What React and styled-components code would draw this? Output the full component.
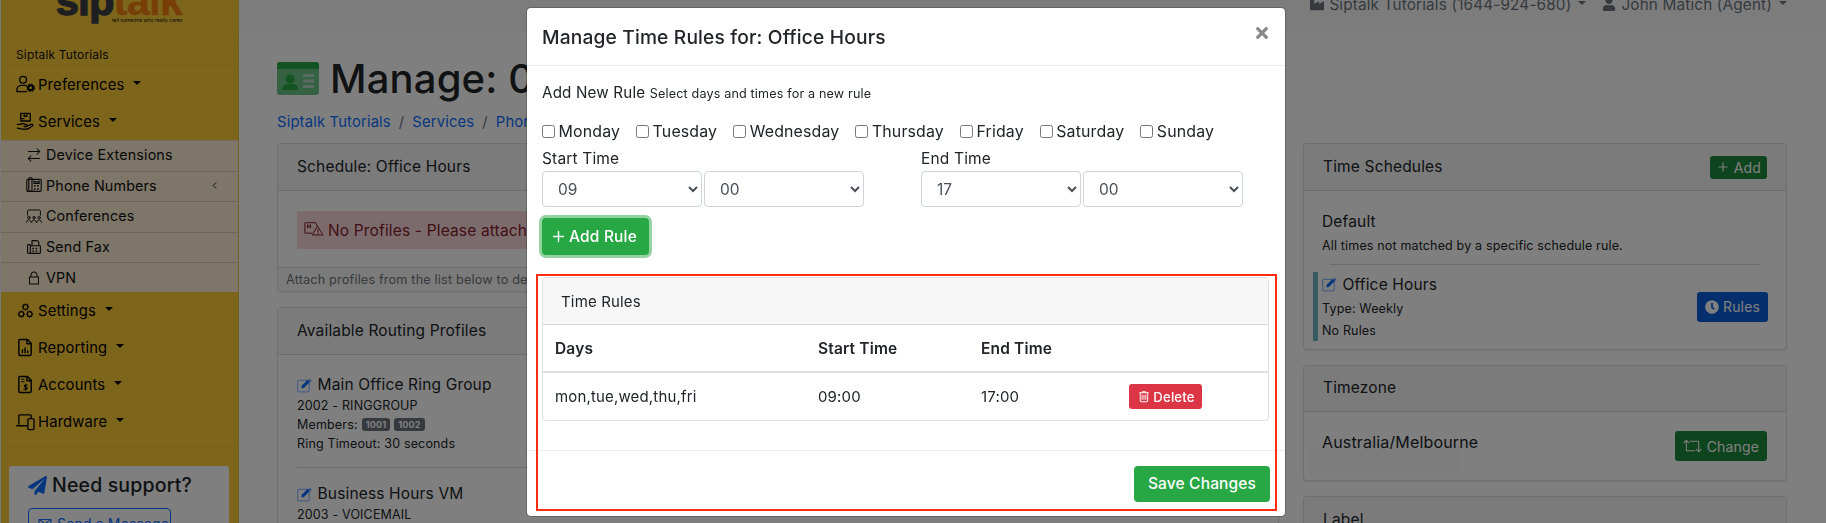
import React from 'react';
import styled, { createGlobalStyle } from 'styled-components';
import {
  LiaExchangeAltSolid,
  LiaLockSolid,
  LiaCogsSolid,
  LiaTrashAltSolid,
  LiaEnvelope,
} from 'react-icons/lia';
import { FaTimes, FaPaperPlane, FaIndustry, FaUser, FaClock } from 'react-icons/fa';
import { LuPlus, LuChevronLeft } from 'react-icons/lu';

const GlobalStyle = createGlobalStyle`
  html, body { margin: 0; padding: 0; height: 523px; overflow: hidden; background: #fff; }
  body { font-family: Inter, "Noto Sans", sans-serif; color: #212529; letter-spacing: 0.01em; }
  * { box-sizing: border-box; }
`;

const Shell = styled.div`
  display: flex;
  width: 1826px;
  height: 523px;
  overflow: hidden;
  position: relative;
`;

/* sidebar */
const Sidebar = styled.aside`
  width: 239px;
  flex: none;
  background: #fdcb38;
  border-left: 1px solid #f5f5f5;
  border-right: 1px solid #e8c040;
  display: flex;
  flex-direction: column;
  overflow: hidden;
`;

const LogoArea = styled.div`
  height: 43px;
  flex: none;
  border-bottom: 1px solid rgba(0, 0, 0, 0.04);
  padding-left: 55px;
  position: relative;
  overflow: hidden;
`;

const LogoWord = styled.div`
  font-family: "Liberation Sans", sans-serif;
  font-weight: 700;
  font-size: 41px;
  line-height: 42px;
  letter-spacing: -0.5px;
  margin-top: -20px;
  color: #3a3f44;
  -webkit-text-stroke: 1.5px #3a3f44;
  span { color: #ef7d10; -webkit-text-stroke: 0.5px #ef7d10; }
`;

const LogoTag = styled.div`
  position: absolute;
  left: 111px;
  top: 17px;
  font-size: 5px;
  line-height: 6px;
  letter-spacing: 0;
  white-space: nowrap;
  color: #111;
`;

const AccountName = styled.div`
  height: 23px;
  flex: none;
  padding-left: 15px;
  font-size: 12px;
  line-height: 23px;
  color: #111;
  border-bottom: 1px solid rgba(0, 0, 0, 0.04);
`;

const NavRow = styled.div`
  height: 37px;
  flex: none;
  display: flex;
  align-items: center;
  font-size: 14.8px;
  color: #000;
`;

const NavIcon = styled.span`
  width: 37px;
  flex: none;
  padding-left: 15px;
  svg { display: block; width: 19px; height: 19px; }
`;

const Caret = styled.span`
  flex: none;
  width: 0;
  height: 0;
  margin: -3px 0 0 ${({ $gap }) => $gap ?? 9}px;
  border-top: 4.5px solid currentColor;
  border-left: 4.5px solid transparent;
  border-right: 4.5px solid transparent;
`;

const SubPanel = styled.div`
  flex: none;
  background: #faecd2;
  height: 152px;
  border-top: 1px solid rgba(0, 0, 0, 0.06);
`;

const SubRow = styled.div`
  height: 30.6px;
  display: flex;
  align-items: center;
  font-size: 14.3px;
  color: #111;
  padding: 0 0 2px 25px;
  gap: 4px;
  border-bottom: ${({ $last }) => ($last ? 'none' : '1px solid rgba(0, 0, 0, 0.14)')};
  svg { width: 16px; height: 16px; flex: none; }
`;

const SubChevron = styled(LuChevronLeft)`
  margin-left: auto;
  margin-right: 18px;
  && { width: 11px; height: 11px; }
`;

const SideDivider = styled.div`
  height: 1px;
  flex: none;
  background: rgba(0, 0, 0, 0.04);
  margin-top: 6px;
`;

const SupportCard = styled.div`
  flex: none;
  margin: 19px 0 0 8px;
  width: 220px;
  height: 100px;
  background: #fff;
  border-radius: 3px;
  padding: 6px 19px;
`;

const SupportTitle = styled.div`
  display: flex;
  align-items: center;
  gap: 5px;
  font-size: 19.5px;
  font-weight: 500;
  line-height: 26px;
  color: #212529;
  svg { color: #0d6efd; width: 19px; height: 19px; }
`;

const SupportButton = styled.div`
  margin-top: 10px;
  width: 143px;
  height: 30px;
  border: 1px solid #0d6efd;
  border-radius: 4px;
  color: #0d6efd;
  font-size: 14px;
  display: flex;
  align-items: center;
  gap: 4px;
  padding-left: 8px;
  svg { width: 16px; height: 16px; }
`;

/* page */
const Main = styled.main`
  flex: 1;
  min-width: 0;
  display: flex;
  flex-direction: column;
`;

const TopBar = styled.header`
  height: 33px;
  flex: none;
  background: #f8f8f8;
  display: flex;
  justify-content: flex-end;
  padding-right: 39px;
  gap: 16px;
  overflow: hidden;
`;

const TopItem = styled.div`
  margin-top: -7px;
  height: 22px;
  display: flex;
  align-items: center;
  gap: 5px;
  font-size: 15.3px;
  color: #6c757d;
  svg { width: 14px; height: 14px; }
`;

const Columns = styled.div`
  display: flex;
  gap: 24px;
  padding-left: 38px;
`;

const LeftColumn = styled.div`
  width: 1002px;
  flex: none;
`;

const RightColumn = styled.div`
  width: 484px;
  flex: none;
  padding-top: 110px;
`;

const PageTitle = styled.h1`
  margin: 20px 0 0;
  height: 50px;
  display: flex;
  align-items: center;
  gap: 11px;
  font-size: 40px;
  font-weight: 500;
  color: #212529;
`;

const Breadcrumbs = styled.nav`
  margin-top: 7px;
  height: 23px;
  display: flex;
  align-items: center;
  gap: 8px;
  font-size: 14.8px;
  color: #0d6efd;
  span { color: #6c757d; }
`;

const Card = styled.section`
  background: #fff;
  border: 1px solid rgba(0, 0, 0, 0.125);
  border-radius: 4px;
  margin-top: ${({ $gap }) => $gap ?? 15}px;
  box-shadow: 0 1px 2px rgba(0, 0, 0, 0.08);
`;

const CardHeader = styled.div`
  height: ${({ $h }) => $h || 47}px;
  padding: 0 19px 2px;
  display: flex;
  align-items: center;
  justify-content: space-between;
  background: #f7f7f7;
  border-bottom: 1px solid rgba(0, 0, 0, 0.125);
  font-size: 15.5px;
  color: #212529;
`;

const CardBody = styled.div`
  padding: ${({ $pad }) => $pad || '19px'};
`;

const Alert = styled.div`
  height: 38px;
  background: #f8d7da;
  color: #842029;
  display: flex;
  align-items: center;
  gap: 4px;
  padding-left: 7px;
  font-size: 15.5px;
  svg { width: 20px; height: 20px; }
`;

const CardFooter = styled.div`
  height: 24px;
  padding-left: 8px;
  display: flex;
  align-items: center;
  background: #f7f7f7;
  border-top: 1px solid rgba(0, 0, 0, 0.125);
  font-size: 12.7px;
  color: #6c757d;
`;

const ItemTitle = styled.div`
  display: flex;
  align-items: center;
  gap: 4.5px;
  font-size: 15.5px;
  line-height: 22px;
  color: #212529;
`;

const ItemText = styled.div`
  font-size: 12.5px;
  line-height: 19px;
  margin-top: ${({ $mt }) => $mt || 0}px;
  display: flex;
  align-items: center;
  gap: 3px;
  color: #212529;
`;

const Badge = styled.span`
  background: #6c757d;
  color: #fff;
  font-size: 9px;
  font-weight: 700;
  border-radius: 3px;
  padding: 2px 4px;
  margin-left: 1px;
  line-height: 9px;
`;

const ItemDivider = styled.hr`
  border: 0;
  border-top: 1px solid rgba(0, 0, 0, 0.15);
  margin: ${({ $m }) => $m || '14px 0 15px'};
`;

const Button = styled.div`
  height: ${({ $h }) => $h || 30}px;
  padding: 0 ${({ $px }) => $px || 8}px;
  display: inline-flex;
  align-items: center;
  gap: ${({ $gap }) => $gap || 4}px;
  border-radius: 3px;
  font-size: 14px;
  color: #fff;
  background: ${({ $bg }) => $bg};
  svg { width: ${({ $icon }) => $icon || 14}px; height: 14px; }
`;

const HeaderButton = styled(Button)`
  margin-top: 2px;
`;

const ScheduleRow = styled.div`
  margin-left: -9px;
  padding-left: 4px;
  border-left: 5px solid #6eb4be;
  height: 69px;
  display: flex;
  justify-content: space-between;
  align-items: center;
`;

const ScheduleLines = styled.div`
  display: flex;
  flex-direction: column;
  gap: 3px;
`;

const Redacted = styled.div`
  position: absolute;
  left: 1310px;
  top: 449px;
  width: 149px;
  height: 27px;
  background: #fafafa;
`;

const SpaceRow = styled.div`
  display: flex;
  justify-content: space-between;
  align-items: center;
`;

const ZoneName = styled.span`
  font-size: 16px;
  padding-bottom: 8px;
`;

/* modal */
const Backdrop = styled.div`
  position: fixed;
  inset: 0;
  background: rgba(0, 0, 0, 0.5);
`;

const Modal = styled.div`
  position: fixed;
  left: 526px;
  top: 7px;
  width: 760px;
  height: 510px;
  background: #fff;
  border-radius: 5px;
  border: 1px solid rgba(0, 0, 0, 0.2);
  display: flex;
  flex-direction: column;
  background-clip: padding-box;
`;

const ModalHeader = styled.div`
  height: 58px;
  flex: none;
  padding: 0 15px;
  display: flex;
  align-items: center;
  justify-content: space-between;
  border-bottom: 1px solid #e9ecef;
`;

const ModalTitle = styled.h5`
  margin: 0;
  font-size: 19.2px;
  font-weight: 500;
  color: #212529;
`;

const CloseIcon = styled(FaTimes)`
  width: 12px;
  height: 18px;
  color: #888;
  margin: -8px 2px 0 0;
`;

const ModalBody = styled.div`
  flex: 1;
  padding: 15px 15px 0;
`;

const RuleHeading = styled.div`
  font-size: 15.2px;
  line-height: 24px;
  color: #212529;
  small { font-size: 12.6px; }
`;

const DayRow = styled.div`
  display: flex;
  margin-top: 13px;
  height: 24px;
  align-items: center;
  gap: 16px;
`;

const DayLabel = styled.label`
  display: flex;
  align-items: center;
  gap: 3.5px;
  font-size: 15.9px;
  color: #212529;
  input { margin: 0; width: 13px; height: 13px; }
`;

const TimeGrid = styled.div`
  display: grid;
  grid-template-columns: 379px 1fr;
  margin-top: 4px;
`;

const TimeLabel = styled.div`
  font-size: 15.5px;
  line-height: 24px;
  height: 24px;
`;

const SelectPair = styled.div`
  display: flex;
  gap: 2px;
`;

const TimeSelect = styled.select`
  width: 160px;
  height: 36px;
  padding: 0 11px;
  border: 1px solid #ced4da;
  border-radius: 4px;
  background: #fff;
  font: inherit;
  font-size: 15.5px;
  color: #495057;
`;

const AddRule = styled.div`
  margin-top: 11px;
  width: 107px;
  height: 37px;
  padding-right: 4px;
  display: flex;
  align-items: center;
  justify-content: center;
  gap: 2px;
  background: #28a745;
  color: #fff;
  font-size: 15.5px;
  font-weight: 500;
  border-radius: 4px;
  box-shadow: 0 0 0 3px rgba(40, 167, 69, 0.5);
  svg { width: 17px; height: 17px; }
`;

const RulesCard = styled.div`
  margin-top: 22px;
  width: 727px;
  height: 144px;
  border: 1px solid rgba(0, 0, 0, 0.125);
  border-radius: 4px;
  overflow: hidden;
`;

const RulesHeader = styled.div`
  height: 47px;
  padding-left: 18px;
  display: flex;
  align-items: center;
  background: #f7f7f7;
  border-bottom: 1px solid rgba(0, 0, 0, 0.125);
  font-size: 15px;
  color: #212529;
`;

const RulesTable = styled.table`
  width: 100%;
  border-collapse: collapse;
  table-layout: fixed;
  font-size: 15px;
  color: #212529;
  th, td { padding: 0 0 0 12px; text-align: left; }
  th { height: 47px; font-weight: 600; font-size: 15.5px; border-bottom: 2px solid #dee2e6; }
  td { height: 48px; }
  th:nth-child(1) { width: 263px; }
  th:nth-child(2) { width: 163px; }
  th:nth-child(3) { width: 148px; }
`;

const DeleteButton = styled.div`
  width: 73px;
  height: 25px;
  display: flex;
  align-items: center;
  justify-content: center;
  gap: 2px;
  background: #dc3545;
  color: #fff;
  font-size: 13.2px;
  font-weight: 500;
  border-radius: 3px;
  svg { width: 15px; height: 15px; }
`;

const ModalFooter = styled.div`
  height: 66px;
  flex: none;
  padding-right: 15px;
  display: flex;
  align-items: center;
  justify-content: flex-end;
  border-top: 1px solid #e9ecef;
`;

const SaveButton = styled.div`
  width: 136px;
  height: 36px;
  display: flex;
  align-items: center;
  justify-content: center;
  background: #28a745;
  color: #fff;
  font-size: 15.5px;
  font-weight: 500;
  border-radius: 4px;
`;

const Highlight = styled.div`
  position: fixed;
  left: 536px;
  top: 274px;
  width: 741px;
  height: 237px;
  border: 2px solid #ff2d0f;
  pointer-events: none;
`;

const EditSvg = styled.svg`
  flex: none;
  width: 16px;
  height: 15px;
`;

/* drawn icons */
const line = { fill: 'none', stroke: 'currentColor', strokeWidth: 1.4, strokeLinecap: 'round', strokeLinejoin: 'round' };

const UserCogIcon = () => (
  <svg viewBox="0 0 20 20">
    <g {...line}>
      <circle cx="7.5" cy="5" r="3.6" />
      <path d="M1 17v-1.5C1 13 3 11 5.5 11h4c1 0 1.5.3 2 .6M1 17.5h10" />
    </g>
    <circle cx="15.5" cy="13.5" r="2.6" fill="none" stroke="currentColor" strokeWidth="2.2" />
    <circle cx="15.5" cy="13.5" r="3.8" fill="none" stroke="currentColor" strokeWidth="1.4" strokeDasharray="1.5 1.5" />
  </svg>
);

const HandBoxIcon = () => (
  <svg viewBox="0 0 20 20">
    <g {...line}>
      <path d="M5 1.5h10v8H5zM8.5 1.5v3h3v-3M6.5 7h2" />
      <path d="M1.5 13h3c1.500-1 3-1 4.500-.3l2 .6c1.200.4 1 2-.3 2H8.500M11.500 14.800l4.500-1.800c1.600-.5 2.300 1.300 1 2l-5 3H6c-1.500 0-2.500-1-4.500-1" />
    </g>
  </svg>
);

const PhoneOfficeIcon = () => (
  <svg viewBox="0 0 20 20">
    <g {...line}>
      <rect x="1" y="3" width="18" height="15" rx="1.500" />
      <rect x="3.500" y="1" width="4" height="17" rx="1" />
      <path d="M10 6h6.500M10 5v3h6.500V5" />
    </g>
    <g fill="currentColor">
      <rect x="10" y="10" width="2" height="2" /><rect x="14" y="10" width="2" height="2" />
      <rect x="10" y="14" width="2" height="2" /><rect x="14" y="14" width="2" height="2" />
    </g>
  </svg>
);

const ClassIcon = () => (
  <svg viewBox="0 0 20 20">
    <g {...line} strokeWidth="1.200">
      <path d="M2 9V3.500C2 3 2.500 2.500 3 2.500h14c.5 0 1 .5 1 1V9" />
      <circle cx="3.500" cy="12" r="1.500" /><circle cx="10" cy="12" r="1.500" /><circle cx="16.500" cy="12" r="1.500" />
      <path d="M.8 18c0-2 1-3 2.700-3s2.700 1 2.700 3M7.300 18c0-2 1-3 2.700-3s2.700 1 2.700 3M13.800 18c0-2 1-3 2.700-3s2.700 1 2.700 3" />
    </g>
  </svg>
);

const FaxIcon = () => (
  <svg viewBox="0 0 20 20">
    <g {...line}>
      <rect x="2" y="7" width="3.500" height="11" rx="1" />
      <path d="M5.500 8.500H17c.6 0 1 .4 1 1V17c0 .6-.4 1-1 1H5.500M7.500 8V2h6.500l2 2v4" />
    </g>
    <g fill="currentColor">
      <rect x="8" y="11" width="2" height="1.800" /><rect x="12" y="11" width="2" height="1.800" />
      <rect x="8" y="14.300" width="2" height="1.800" /><rect x="12" y="14.300" width="2" height="1.800" />
    </g>
  </svg>
);

const FileChartIcon = () => (
  <svg viewBox="0 0 20 20">
    <g {...line} strokeWidth="1.500">
      <path d="M4 1.500h8l4 4V17c0 .8-.6 1.500-1.500 1.500h-10.500C3.500 18.500 3 18 3 17V3c0-.8.300-1.500 1-1.500zM11.500 1.500V6H16" />
    </g>
    <g fill="currentColor">
      <rect x="6" y="12" width="1.500" height="4" /><rect x="8.800" y="10" width="1.500" height="6" /><rect x="11.600" y="13" width="1.500" height="3" />
    </g>
  </svg>
);

const FileDollarIcon = () => (
  <svg viewBox="0 0 20 20">
    <g {...line} strokeWidth="1.500">
      <path d="M4 1.500h8l4 4V17c0 .8-.6 1.500-1.500 1.500h-10.500C3.500 18.500 3 18 3 17V3c0-.8.300-1.500 1-1.500zM11.500 1.500V6H16" />
      <path d="M6 4.500h2.500M6 7h2.500M12 10.500h-2.200c-1.500 0-1.500 2.200 0 2.200h.8c1.500 0 1.500 2.300 0 2.300H8.300M10.200 9.500v6.500" strokeWidth="1.100" />
    </g>
  </svg>
);

const LaptopPhoneIcon = () => (
  <svg viewBox="0 0 20 20">
    <g {...line}>
      <path d="M3 13V4c0-.6.4-1 1-1h11c.6 0 1 .4 1 1v2.500M.8 14.500h10.500" />
      <rect x="12.500" y="7" width="6.500" height="11.500" rx="1.200" />
    </g>
  </svg>
);

const BillIcon = () => (
  <svg viewBox="0 0 22 20">
    <g {...line} strokeWidth="1.100">
      <path d="M1.500 2h11.500l1.500 3.500M1 2.500v11h7.500" />
      <path d="M3.800 4.500v3M5.500 4.500v3M7.200 4.500v3" />
      <path d="M15 6l6 9.500H9.500z" />
      <path d="M15.300 9.500v3M15.300 14v.3" />
    </g>
  </svg>
);

const RetweetIcon = () => (
  <svg viewBox="0 0 20 14">
    <g {...line} strokeWidth="1.100">
      <path d="M1 3.500L3.500 1 6 3.500M3.500 1v11h9" />
      <path d="M19 10.500L16.500 13 14 10.500M16.500 13V2h-9" />
    </g>
  </svg>
);

const IdCardIcon = () => (
  <svg viewBox="0 0 42 33" width="42" height="33">
    <rect width="42" height="33" rx="3" fill="#6cc488" />
    <path d="M3 0h36a3 3 0 0 1 3 3v4H0V3a3 3 0 0 1 3-3z" fill="#28a745" />
    <circle cx="13" cy="17" r="4.500" fill="#28a745" />
    <path d="M5 28c0-4 2-6 5-6h6c3 0 5 2 5 6z" fill="#28a745" />
    <g fill="#b4d8c0"><rect x="26" y="12" width="11" height="3" /><rect x="26" y="17.500" width="11" height="3" /><rect x="26" y="23" width="11" height="3" /></g>
  </svg>
);

const EditIcon = () => (
  <EditSvg viewBox="0 0 18 16">
    <rect x="0.700" y="2.200" width="13" height="13" rx="1.500" fill="none" stroke="#0d6efd" strokeOpacity="0.45" strokeWidth="1.400" />
    <path d="M5 8.500l7-7 2.500 2.500-7 7H5z" fill="#0d6efd" />
    <path d="M13.200.8l.8-.5 2.500 2.500-1 1z" fill="#0d6efd" />
  </EditSvg>
);

const days = ['Monday', 'Tuesday', 'Wednesday', 'Thursday', 'Friday', 'Saturday', 'Sunday'];

export default function App() {
  return (
    <>
      <GlobalStyle />
      <Shell>
        <Sidebar>
          <LogoArea>
            <LogoWord>sip<span>talk</span></LogoWord>
            <LogoTag>tell someone who really cares</LogoTag>
          </LogoArea>
          <AccountName>Siptalk Tutorials</AccountName>
          <NavRow><NavIcon><UserCogIcon /></NavIcon>Preferences<Caret /></NavRow>
          <NavRow><NavIcon><HandBoxIcon /></NavIcon>Services<Caret /></NavRow>
          <SubPanel>
            <SubRow><LiaExchangeAltSolid />Device Extensions</SubRow>
            <SubRow><PhoneOfficeIcon />Phone Numbers<SubChevron /></SubRow>
            <SubRow><ClassIcon />Conferences</SubRow>
            <SubRow><FaxIcon />Send Fax</SubRow>
            <SubRow $last><LiaLockSolid />VPN</SubRow>
          </SubPanel>
          <NavRow><NavIcon><LiaCogsSolid /></NavIcon>Settings<Caret /></NavRow>
          <NavRow><NavIcon><FileChartIcon /></NavIcon>Reporting<Caret /></NavRow>
          <NavRow><NavIcon><FileDollarIcon /></NavIcon>Accounts<Caret /></NavRow>
          <NavRow><NavIcon><LaptopPhoneIcon /></NavIcon>Hardware<Caret /></NavRow>
          <SideDivider />
          <SupportCard>
            <SupportTitle><FaPaperPlane />Need support?</SupportTitle>
            <SupportButton><LiaEnvelope />Send a Message</SupportButton>
          </SupportCard>
        </Sidebar>

        <Main>
          <TopBar>
            <TopItem><FaIndustry />Siptalk Tutorials (1644-924-680)<Caret $gap={2} /></TopItem>
            <TopItem><FaUser />John Matich (Agent)<Caret $gap={2} /></TopItem>
          </TopBar>
          <Columns>
            <LeftColumn>
              <PageTitle><IdCardIcon />Manage: 0</PageTitle>
              <Breadcrumbs>Siptalk Tutorials<span>/</span>Services<span>/</span>Phone Numbers</Breadcrumbs>
              <Card $gap={10}>
                <CardHeader>Schedule: Office Hours</CardHeader>
                <CardBody $pad="20px 19px 18px">
                  <Alert><BillIcon />No Profiles - Please attach a profile</Alert>
                </CardBody>
                <CardFooter>Attach profiles from the list below to define routing</CardFooter>
              </Card>
              <Card>
                <CardHeader>Available Routing Profiles</CardHeader>
                <CardBody>
                  <ItemTitle><EditIcon />Main Office Ring Group</ItemTitle>
                  <ItemText>2002 - RINGGROUP</ItemText>
                  <ItemText>Members: <Badge>1001</Badge> <Badge>1002</Badge></ItemText>
                  <ItemText>Ring Timeout: 30 seconds</ItemText>
                  <ItemDivider />
                  <ItemTitle><EditIcon />Business Hours VM</ItemTitle>
                  <ItemText>2003 - VOICEMAIL</ItemText>
                </CardBody>
              </Card>
            </LeftColumn>

            <RightColumn>
              <Card $gap={0}>
                <CardHeader>Time Schedules<HeaderButton $h={23} $px={6} $bg="#1e8a3c"><LuPlus />Add</HeaderButton></CardHeader>
                <CardBody $pad="20px 18px 8px">
                  <ItemTitle>Default</ItemTitle>
                  <ItemText $mt={3}>All times not matched by a specific schedule rule.</ItemText>
                  <ItemDivider $m="9px 8px 7px" />
                  <ScheduleRow>
                    <ScheduleLines>
                      <ItemTitle><EditIcon />Office Hours</ItemTitle>
                      <ItemText>Type: Weekly</ItemText>
                      <ItemText>No Rules</ItemText>
                    </ScheduleLines>
                    <Button $bg="#0b5fd8"><FaClock />Rules</Button>
                  </ScheduleRow>
                </CardBody>
              </Card>
              <Card>
                <CardHeader $h={46}>Timezone</CardHeader>
                <CardBody $pad="19px 19px 19px 18px">
                  <SpaceRow>
                    <ZoneName>Australia/Melbourne</ZoneName>
                    <Button $bg="#1e8a3c" $gap={5} $icon={19}><RetweetIcon />Change</Button>
                  </SpaceRow>
                </CardBody>
              </Card>
              <Card>
                <CardHeader>Label</CardHeader>
              </Card>
            </RightColumn>
          </Columns>
        </Main>
        <Redacted />
      </Shell>

      <Backdrop />
      <Modal>
        <ModalHeader>
          <ModalTitle>Manage Time Rules for: Office Hours</ModalTitle>
          <CloseIcon />
        </ModalHeader>
        <ModalBody>
          <RuleHeading>Add New Rule <small>Select days and times for a new rule</small></RuleHeading>
          <DayRow>
            {days.map((d) => (
              <DayLabel key={d}><input type="checkbox" />{d}</DayLabel>
            ))}
          </DayRow>
          <TimeGrid>
            <div>
              <TimeLabel>Start Time</TimeLabel>
              <SelectPair>
                <TimeSelect defaultValue="09"><option>09</option></TimeSelect>
                <TimeSelect defaultValue="00"><option>00</option></TimeSelect>
              </SelectPair>
            </div>
            <div>
              <TimeLabel>End Time</TimeLabel>
              <SelectPair>
                <TimeSelect defaultValue="17"><option>17</option></TimeSelect>
                <TimeSelect defaultValue="00"><option>00</option></TimeSelect>
              </SelectPair>
            </div>
          </TimeGrid>
          <AddRule><LuPlus />Add Rule</AddRule>
          <RulesCard>
            <RulesHeader>Time Rules</RulesHeader>
            <RulesTable>
              <thead>
                <tr><th>Days</th><th>Start Time</th><th>End Time</th><th /></tr>
              </thead>
              <tbody>
                <tr>
                  <td>mon,tue,wed,thu,fri</td>
                  <td>09:00</td>
                  <td>17:00</td>
                  <td><DeleteButton><LiaTrashAltSolid />Delete</DeleteButton></td>
                </tr>
              </tbody>
            </RulesTable>
          </RulesCard>
        </ModalBody>
        <ModalFooter>
          <SaveButton>Save Changes</SaveButton>
        </ModalFooter>
      </Modal>
      <Highlight />
    </>
  );
}
